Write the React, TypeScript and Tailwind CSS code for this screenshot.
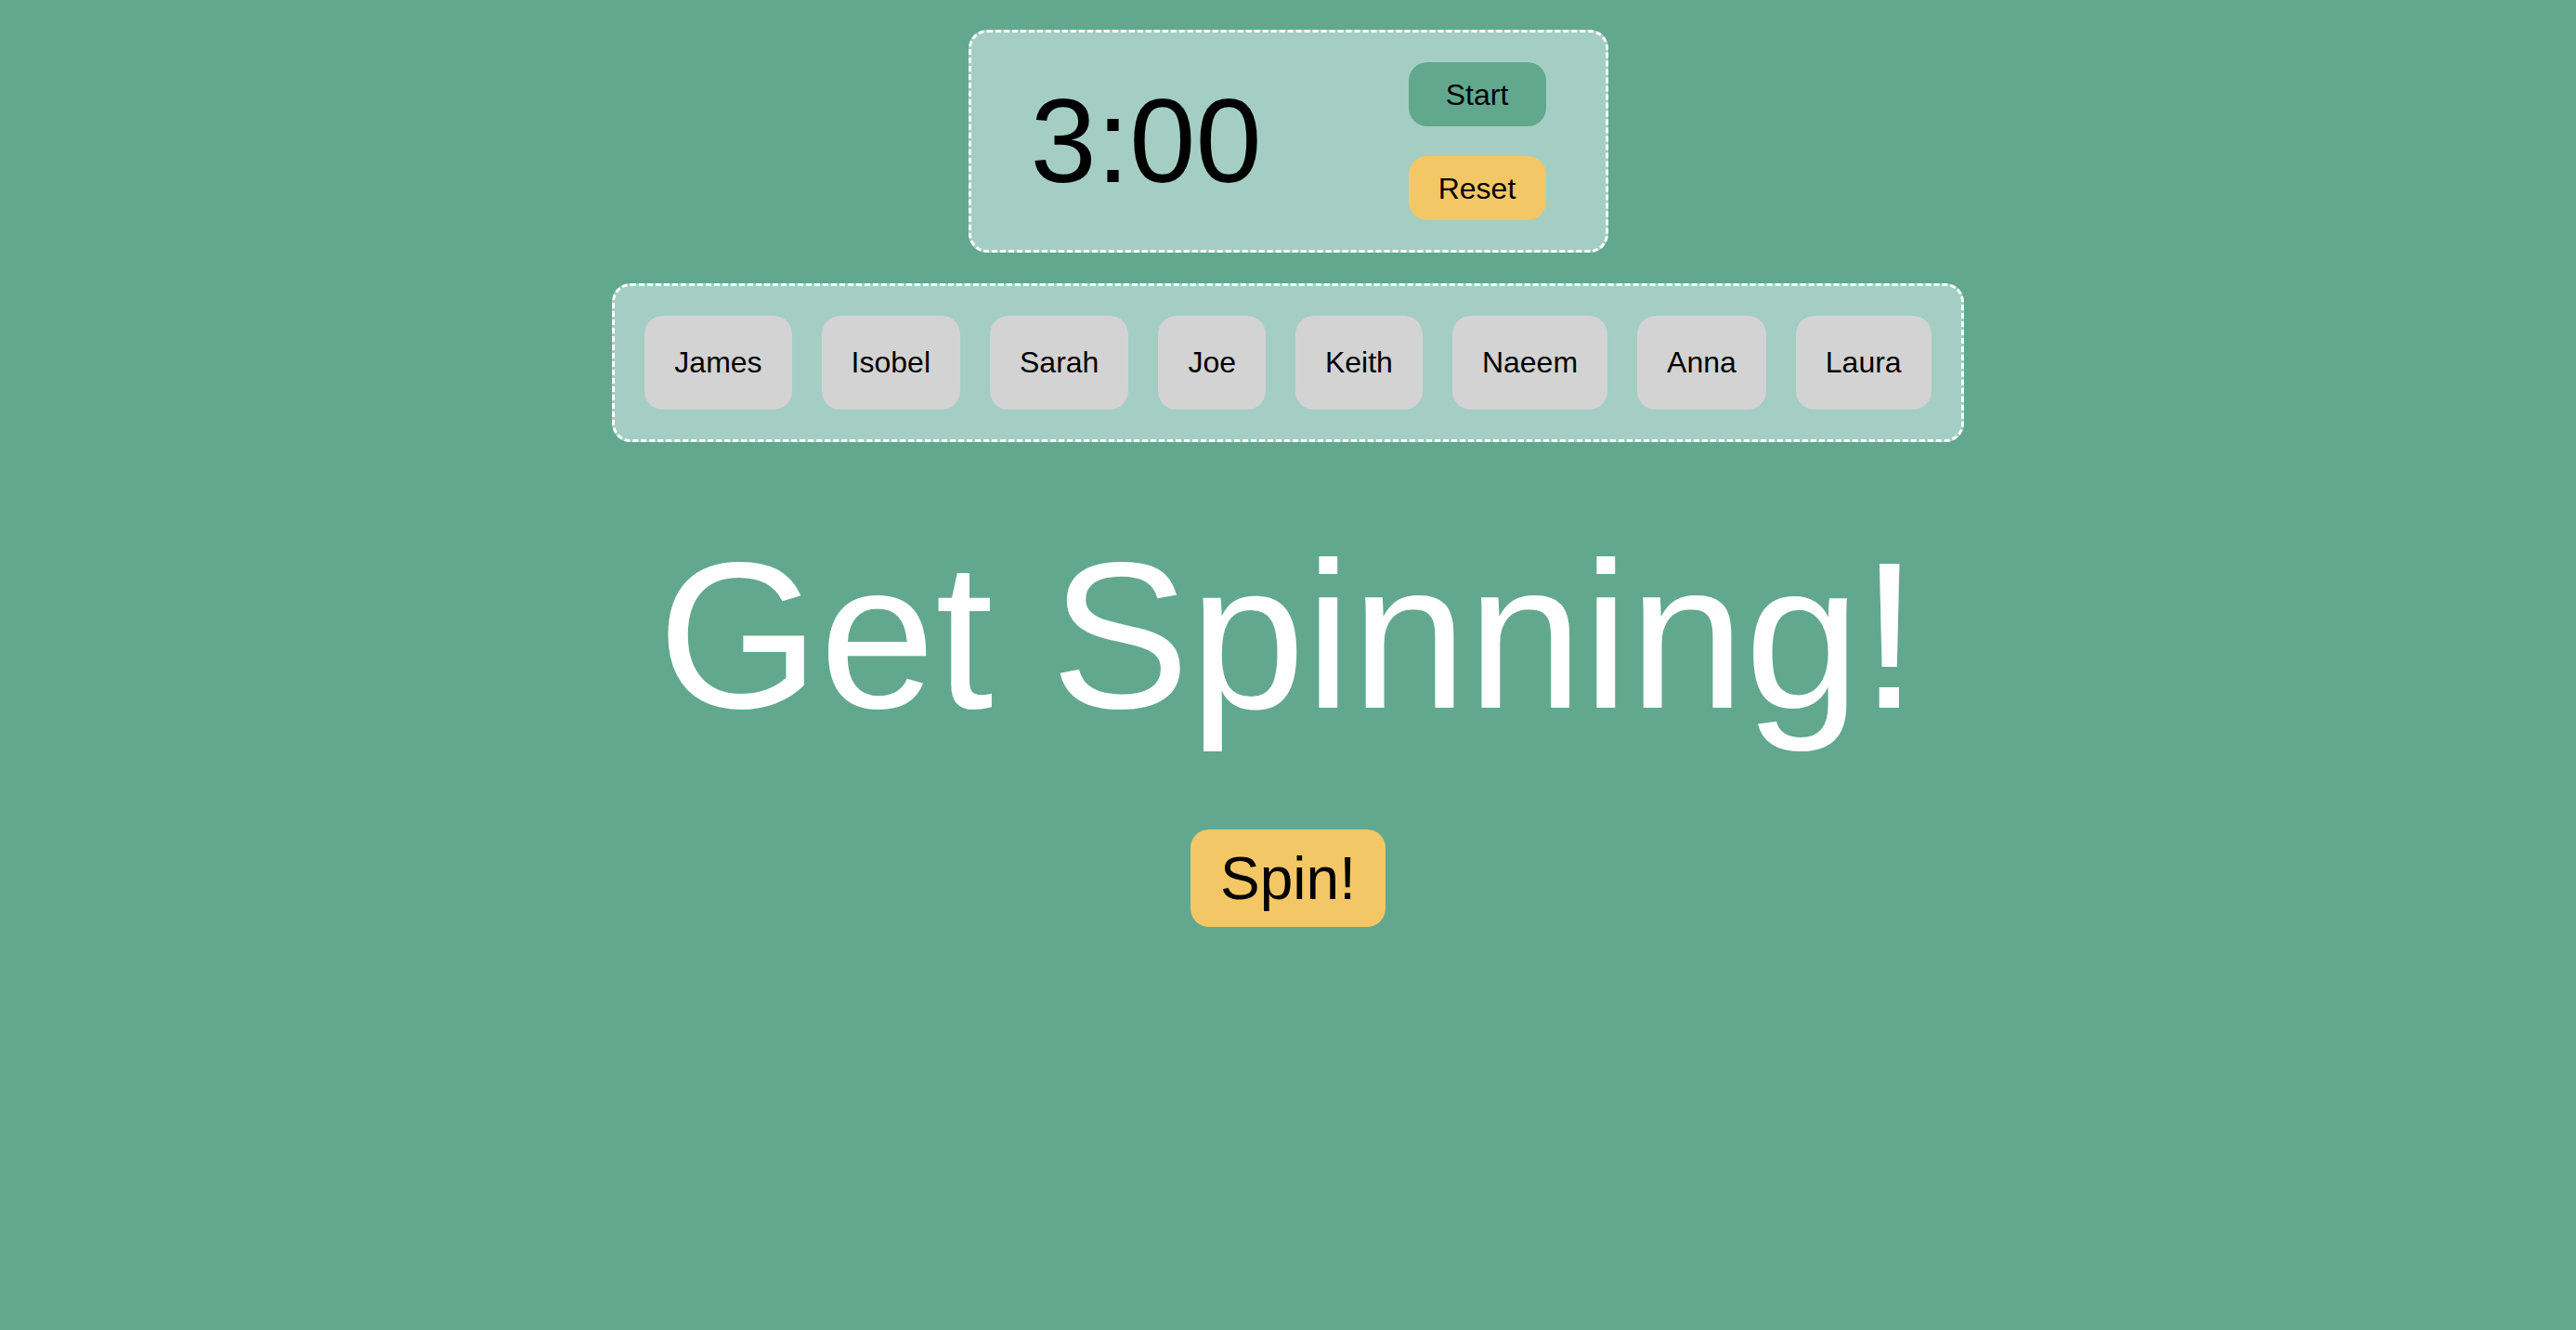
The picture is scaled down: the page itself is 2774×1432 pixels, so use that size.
import React from "react";

const names = ["James", "Isobel", "Sarah", "Joe", "Keith", "Naeem", "Anna", "Laura"];

export default function App() {
  return (
    <div
      className="min-h-[1432px] w-full bg-[#62a88e] flex flex-col items-center pt-[32px] text-black"
      style={{ fontFamily: '"Liberation Sans", Arial, sans-serif' }}
    >
      <div className="w-[689px] h-[240px] bg-[#a4cec3] border-[3px] border-dashed border-white rounded-[20px] flex items-center justify-between pl-[64px] pr-[64px]">
        <div className="text-[128px] leading-none">3:00</div>
        <div className="flex flex-col gap-[32px]">
          <button className="w-[148px] h-[69px] rounded-[20px] bg-[#62a88e] text-[32px] leading-none">
            Start
          </button>
          <button className="w-[148px] h-[69px] rounded-[20px] bg-[#f3c765] text-[32px] leading-none">
            Reset
          </button>
        </div>
      </div>

      <div className="mt-[33px] bg-[#a4cec3] border-[3px] border-dashed border-white rounded-[20px] p-[32px] flex gap-[32px]">
        {names.map((n) => (
          <div
            key={n}
            className="bg-[#d3d3d3] rounded-[20px] px-[32px] h-[101px] flex items-center text-[32px] leading-[37px]"
          >
            {n}
          </div>
        ))}
      </div>

      <h1 className="mt-[79px] text-white text-[224px] leading-[258px] font-normal">
        Get Spinning!
      </h1>

      <button className="mt-[80px] bg-[#f3c765] rounded-[20px] px-[32px] h-[105px] text-[64px] leading-none">
        Spin!
      </button>
    </div>
  );
}
